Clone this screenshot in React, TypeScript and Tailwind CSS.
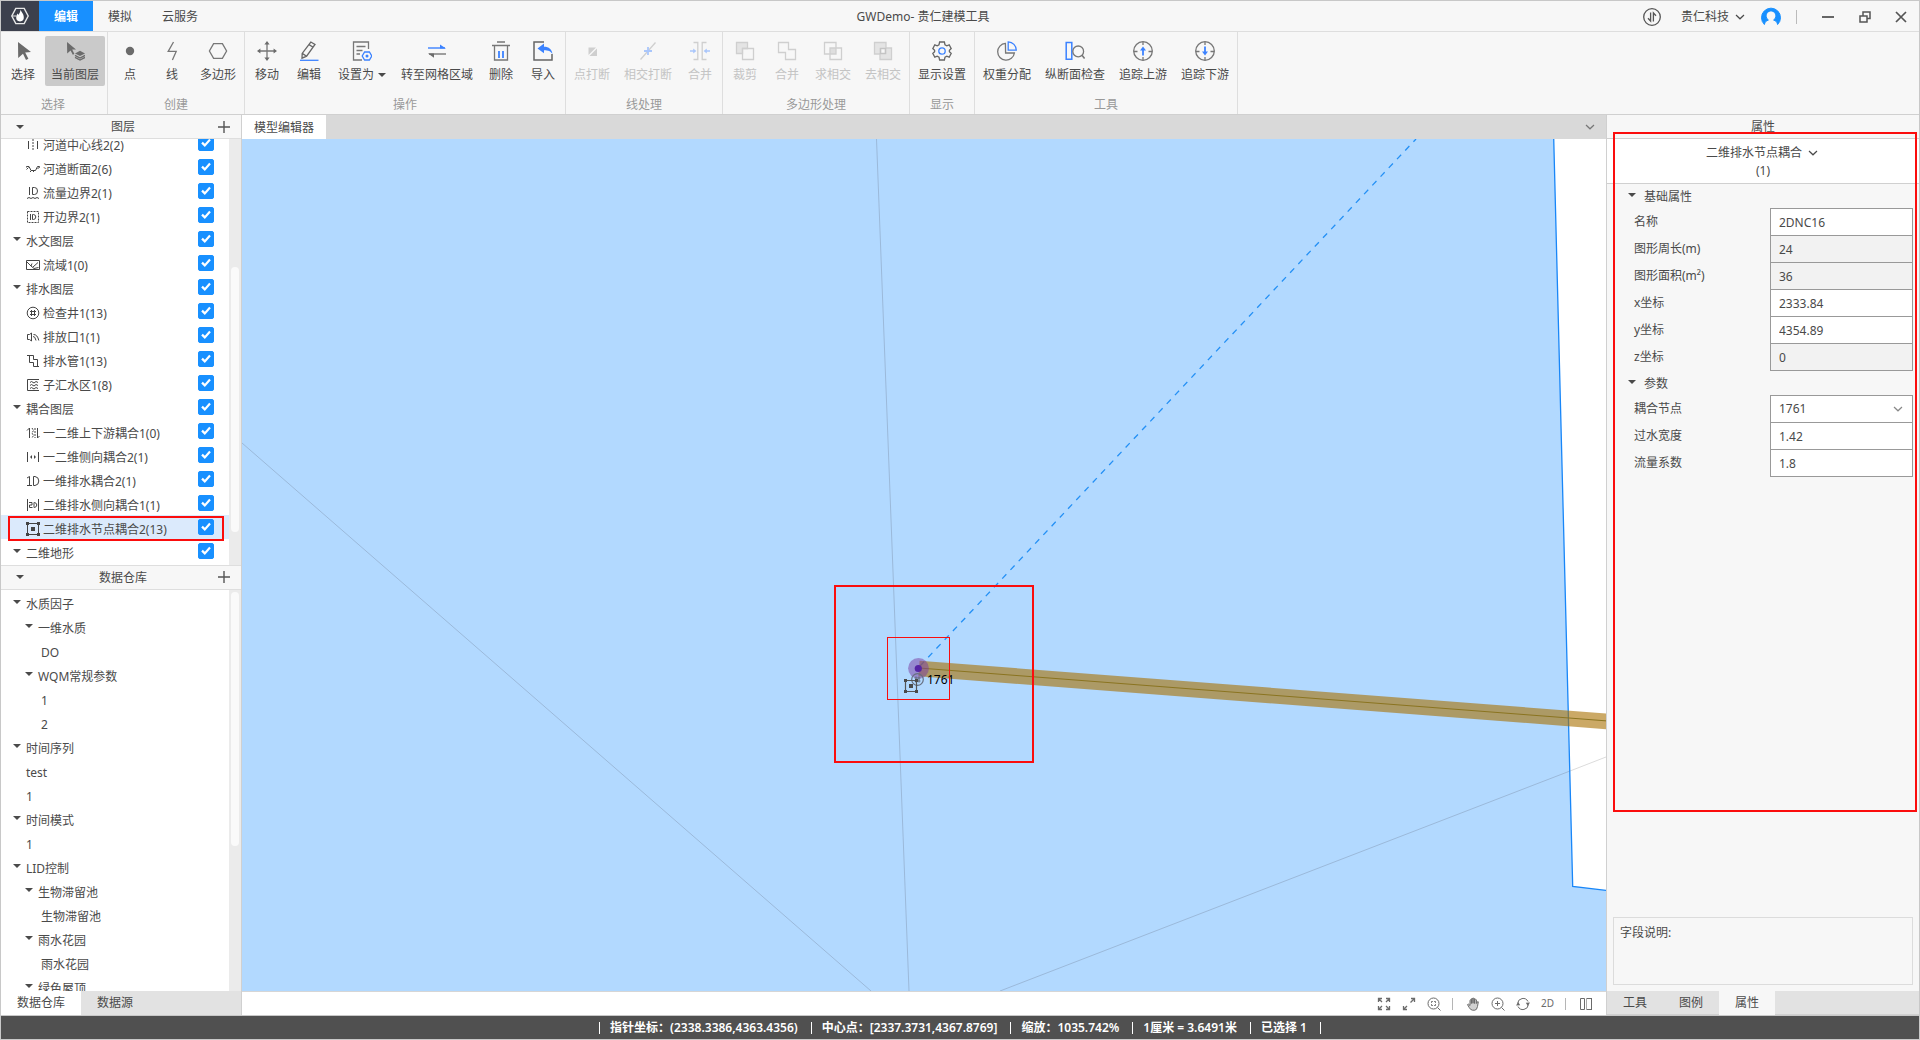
import React from "react";

type IconProps = { size?: number; stroke?: number; children: React.ReactNode; className?: string };

function Icon({ size = 20, stroke = 1.3, children, className = "" }: IconProps) {
  return (
    <svg
      width={size}
      height={size}
      viewBox={`0 0 ${size} ${size}`}
      fill="none"
      stroke="currentColor"
      strokeWidth={stroke}
      className={`shrink-0 ${className}`}
      aria-hidden="true"
    >
      {children}
    </svg>
  );
}

const BLUE = "#3b82ff";
const PALE = "#a9c6fb";

const Caret = ({ className = "" }: { className?: string }) => (
  <svg width="8" height="4" viewBox="0 0 8 4" className={`shrink-0 ${className}`} aria-hidden="true">
    <path d="M0 0H8L4 4Z" fill="#4a4a4a" />
  </svg>
);

const Chevron = ({ className = "" }: { className?: string }) => (
  <svg
    width="10"
    height="6"
    viewBox="0 0 10 6"
    fill="none"
    stroke="currentColor"
    strokeWidth="1.2"
    className={`shrink-0 ${className}`}
    aria-hidden="true"
  >
    <path d="M1 1L5 4.8L9 1" />
  </svg>
);

const Plus = () => (
  <svg width="12" height="12" viewBox="0 0 12 12" stroke="#555" strokeWidth="1.4" aria-hidden="true">
    <path d="M6 0V12M0 6H12" />
  </svg>
);

/* ---------- ribbon icons ---------- */

const toolIcons: Record<string, React.ReactNode> = {
  select: <path d="M5 1L18 11L12.2 11.6L15.4 17.8L13 19L10 12.8L5.2 17Z" fill="#6b6b6b" stroke="none" />,
  layer: (
    <>
      <path d="M2 1L11 8.4L7.2 8.6L9.4 13L7.8 13.8L5.6 9.4L2.2 12.4Z" fill="#6b6b6b" stroke="none" />
      <path d="M15 9.8L20 12.4L15 15L10 12.4Z" fill="#6b6b6b" stroke="none" />
      <path d="M10 14.4L15 17L20 14.4M10 16.4L15 19L20 16.4" stroke="#6b6b6b" />
    </>
  ),
  point: <circle cx="10" cy="10" r="4.2" fill="#6b6b6b" stroke="none" />,
  line: <path d="M11.5 1L6.2 10.4H14.2L10.4 19" stroke="#777" />,
  polygon: <path d="M5.6 2.6H14.4L18.6 10L14.4 17.4H5.6L1.4 10Z" stroke="#777" />,
  move: (
    <>
      <path d="M10 2V18M2 10H18" stroke="#777" />
      <path
        d="M10 0L12.6 3.4H7.4ZM10 20L12.6 16.6H7.4ZM0 10L3.4 7.4V12.6ZM20 10L16.6 7.4V12.6Z"
        fill="#6b6b6b"
        stroke="none"
      />
    </>
  ),
  edit: (
    <>
      <path d="M11.8 1L16 3.4L7.6 15.2L3 17.2L3.2 12.4ZM10 3.6L14.2 6.2M3.2 12.4L7.6 15.2" stroke="#666" />
      <path d="M1 19.3H19.5" stroke={BLUE} />
    </>
  ),
  setAs: (
    <>
      <path d="M16.5 8V1H1.5V19H10M4.5 5.5H13.5M4.5 9.5H10.5M4.5 13H8" stroke="#777" />
      <path d="M12.6 11H17.4L19.8 15L17.4 19H12.6L10.2 15Z" stroke={BLUE} />
      <circle cx="15" cy="15" r="1.5" fill={BLUE} stroke="none" />
    </>
  ),
  toGrid: (
    <>
      <path d="M1 7H18" stroke={BLUE} strokeWidth="1.4" />
      <path d="M13 3.4L19 7.6H13Z" fill={BLUE} stroke="none" />
      <path d="M2 13H19" stroke="#777" strokeWidth="1.4" />
      <path d="M7 16.8L1 12.4H7Z" fill="#6b6b6b" stroke="none" />
    </>
  ),
  remove: (
    <>
      <path d="M1 4.5H19M6 1H14M3.5 5V19H16.5V5" stroke="#777" />
      <path d="M8 10V17M12 10V17" stroke={BLUE} strokeWidth="1.8" />
    </>
  ),
  import: (
    <>
      <path d="M11 1H1V19H19V13" stroke="#666" strokeWidth="1.5" />
      <path d="M4.5 7.4L11 2.6V5.8C16 5.8 19 8.4 19.4 13C17.6 10 15.4 9.2 11 9.2V12.2Z" fill={BLUE} stroke="none" />
    </>
  ),
  breakPoint: (
    <>
      <path d="M6.5 6.5H14L6.5 14Z" fill="#cfcfcf" stroke="none" />
      <path d="M15 7.5V15H7.5Z" fill="#cfcfcf" stroke="none" />
    </>
  ),
  breakCross: (
    <>
      <path d="M2.5 18.5L17.5 1.5" stroke="#cfcfcf" />
      <path d="M10 6V14M6 10H14" stroke={PALE} strokeWidth="1.8" />
    </>
  ),
  mergeLine: (
    <>
      <path d="M3.5 1.5H7.8V18.5H3.5M16.5 1.5H12.2V18.5H16.5" stroke="#cfcfcf" />
      <path d="M0 10H4M16 10H20" stroke={PALE} strokeWidth="1.4" />
      <path d="M3.2 7.4L6.4 10L3.2 12.6ZM16.8 7.4L13.6 10L16.8 12.6Z" fill={PALE} stroke="none" />
    </>
  ),
  clip: (
    <>
      <path d="M1.5 1.5H12.5V7.5H7.5V12.5H1.5Z" fill="#e4e4e4" stroke="#cfcfcf" />
      <path d="M7.5 7.5H18.5V18.5H7.5Z" stroke="#cfcfcf" />
    </>
  ),
  union: <path d="M1.5 1.5H11.5V8.5H18.5V18.5H8.5V11.5H1.5Z" stroke="#cfcfcf" />,
  intersect: (
    <>
      <path d="M7 7H13V13H7Z" fill="#dedede" stroke="none" />
      <path d="M1.5 1.5H13V13H1.5ZM7 7H18.5V18.5H7Z" stroke="#cfcfcf" />
    </>
  ),
  subtract: (
    <>
      <path d="M1.5 1.5H13V7H18.5V18.5H7V13H1.5Z" fill="#e4e4e4" stroke="#cfcfcf" />
      <path d="M7.5 7.5H12.5V12.5H7.5Z" fill="#f7f7f7" stroke="#c4c4c4" strokeWidth="1.6" />
    </>
  ),
  settings: (
    <>
      <path
        d="M7.6 1H12.4L13 3.8L14.8 4.8L17.2 3.8L19.2 7.6L17.4 9.2V10.8L19.2 12.4L17.2 16.2L14.8 15.2L13 16.2L12.4 19H7.6L7 16.2L5.2 15.2L2.8 16.2L0.8 12.4L2.6 10.8V9.2L0.8 7.6L2.8 3.8L5.2 4.8L7 3.8Z"
        stroke="#666"
      />
      <circle cx="10" cy="10" r="3.2" stroke={BLUE} />
    </>
  ),
  weight: (
    <>
      <path d="M8.4 2.4A8.4 8.4 0 1 0 17.4 12H8.6Z" stroke="#777" />
      <path d="M11.2 0.8A8.4 8.4 0 0 1 19.3 9.2H11.2Z" stroke={BLUE} />
    </>
  ),
  profile: (
    <>
      <path d="M1.2 1.5H6.8V18.3H1.2Z" stroke={BLUE} strokeWidth="1.5" />
      <circle cx="13.2" cy="10.4" r="5.4" stroke="#777" />
      <path d="M17 14.2L19.6 17.6" stroke="#777" strokeWidth="1.6" />
    </>
  ),
  traceUp: (
    <>
      <circle cx="10" cy="10" r="9.3" stroke="#777" />
      <path d="M10 0.7V4M10 16V19.3M0.7 10.5H4.5M15.5 10.5H19.3" stroke="#777" />
      <path d="M10 8V14.5" stroke={BLUE} strokeWidth="1.8" />
      <path d="M10 5.4L13 9.6H7Z" fill={BLUE} stroke="none" />
    </>
  ),
  traceDown: (
    <>
      <circle cx="10" cy="10" r="9.3" stroke="#777" />
      <path d="M10 0.7V4M10 16V19.3M0.7 10.5H4.5M15.5 10.5H19.3" stroke="#777" />
      <path d="M10 5.5V12" stroke={BLUE} strokeWidth="1.8" />
      <path d="M10 14.6L13 10.4H7Z" fill={BLUE} stroke="none" />
    </>
  ),
};

type Tool = { label: string; icon: string; width: string; active?: boolean; disabled?: boolean; menu?: boolean };
type Group = { label: string; tools: Tool[] };

const groups: Group[] = [
  {
    label: "选择",
    tools: [
      { label: "选择", icon: "select", width: "w-11" },
      { label: "当前图层", icon: "layer", width: "w-15", active: true },
    ],
  },
  {
    label: "创建",
    tools: [
      { label: "点", icon: "point", width: "w-[42px]" },
      { label: "线", icon: "line", width: "w-[42px]" },
      { label: "多边形", icon: "polygon", width: "w-[50px]" },
    ],
  },
  {
    label: "操作",
    tools: [
      { label: "移动", icon: "move", width: "w-[42px]" },
      { label: "编辑", icon: "edit", width: "w-[42px]" },
      { label: "设置为", icon: "setAs", width: "w-16", menu: true },
      { label: "转至网格区域", icon: "toGrid", width: "w-[86px]" },
      { label: "删除", icon: "remove", width: "w-[42px]" },
      { label: "导入", icon: "import", width: "w-[42px]" },
    ],
  },
  {
    label: "线处理",
    tools: [
      { label: "点打断", icon: "breakPoint", width: "w-[50px]", disabled: true },
      { label: "相交打断", icon: "breakCross", width: "w-[62px]", disabled: true },
      { label: "合并", icon: "mergeLine", width: "w-[42px]", disabled: true },
    ],
  },
  {
    label: "多边形处理",
    tools: [
      { label: "裁剪", icon: "clip", width: "w-[42px]", disabled: true },
      { label: "合并", icon: "union", width: "w-[42px]", disabled: true },
      { label: "求相交", icon: "intersect", width: "w-[50px]", disabled: true },
      { label: "去相交", icon: "subtract", width: "w-[50px]", disabled: true },
    ],
  },
  { label: "显示", tools: [{ label: "显示设置", icon: "settings", width: "w-[62px]" }] },
  {
    label: "工具",
    tools: [
      { label: "权重分配", icon: "weight", width: "w-[62px]" },
      { label: "纵断面检查", icon: "profile", width: "w-[74px]" },
      { label: "追踪上游", icon: "traceUp", width: "w-[62px]" },
      { label: "追踪下游", icon: "traceDown", width: "w-[62px]" },
    ],
  },
];

function ToolButton({ tool }: { tool: Tool }) {
  return (
    <button
      type="button"
      disabled={tool.disabled}
      className={`flex h-[50px] flex-col items-center gap-1.5 rounded-xs pt-[5px] whitespace-nowrap ${tool.width} ${
        tool.active ? "bg-[#cacaca]" : ""
      } ${tool.disabled ? "text-[#c4c4c4]" : "text-[#4a4a4a]"}`}
    >
      <Icon>{toolIcons[tool.icon]}</Icon>
      <span className="flex items-center gap-1 leading-4">
        {tool.label}
        {tool.menu && <Caret />}
      </span>
    </button>
  );
}

function Ribbon() {
  return (
    <nav className="flex shrink-0 border-b border-[#d0d0d0]">
      {groups.map((g, i) => (
        <section
          key={g.label}
          className={`flex flex-col items-center border-r border-[#dedede] pt-1 ${i === 0 ? "pr-0.5" : "px-px"}`}
        >
          <div className="flex">
            {g.tools.map((t) => (
              <ToolButton key={t.label} tool={t} />
            ))}
          </div>
          <h2 className="mt-[11px] pb-px leading-4 text-[#999]">{g.label}</h2>
        </section>
      ))}
    </nav>
  );
}

/* ---------- title bar ---------- */

function TitleBar() {
  return (
    <header className="flex h-[31px] shrink-0 border-b border-[#dedede]">
      <div className="flex w-[212px] shrink-0">
        <div className="flex w-[38px] items-center justify-center bg-[#3c404d]">
          <svg width="18" height="18" viewBox="0 0 18 18" aria-label="logo">
            <path d="M4.8 1.4H13.2L17.2 9L13.2 16.6H4.8L0.8 9Z" fill="none" stroke="#e8e8e8" strokeWidth="1.4" />
            <path
              d="M9.5 2.5C10 5 12.8 6.5 12.8 10.2A4 4 0 0 1 9 14.4A4 4 0 0 1 5.2 10.2C5.2 8.6 6 7.4 6.8 6.6L7.6 8C8.2 6.4 9.4 5.2 9.5 2.5Z"
              fill="#fff"
            />
            <path d="M1 9H5" stroke="#e8e8e8" />
          </svg>
        </div>
        <button type="button" className="w-[54px] bg-[#1890ff] pt-0.5 font-bold text-white">
          编辑
        </button>
        <button type="button" className="w-[54px] pt-0.5">
          模拟
        </button>
        <button type="button" className="w-[66px] pt-0.5">
          云服务
        </button>
      </div>
      <h1 className="flex flex-1 items-center justify-center pt-0.5">GWDemo- 贵仁建模工具</h1>
      <div className="flex w-[286px] shrink-0 items-center pt-px pr-3 pl-2.5">
        <button type="button" aria-label="同步">
          <Icon size={18}>
            <circle cx="9" cy="9" r="8.3" stroke="#555" />
            <path d="M7.6 4.5V13L5 10.2M10.4 13.5V5L13 7.8" stroke="#555" />
          </Icon>
        </button>
        <button type="button" className="ml-5 flex items-center gap-1.5">
          贵仁科技
          <Chevron />
        </button>
        <button type="button" aria-label="账户" className="ml-4">
          <svg width="20" height="20" viewBox="0 0 20 20">
            <path
              d="M3.4 17.5A9.5 9.5 0 1 1 16.6 17.5C16.2 15 14.8 13.8 12.6 13A4.8 4.8 0 1 0 7.4 13C5.2 13.8 3.8 15 3.4 17.5Z"
              fill="#1890ff"
              stroke="#1890ff"
              strokeLinejoin="round"
            />
            <circle cx="10" cy="8.6" r="4.2" fill="#f7f7f7" />
          </svg>
        </button>
        <span className="ml-[15px] h-3.5 w-px bg-[#bbb]" />
        <div className="ml-6 flex flex-1 items-center justify-between text-[#555]">
          <button type="button" aria-label="最小化">
            <Icon size={14}>
              <path d="M1 7H13" strokeWidth="1.8" />
            </Icon>
          </button>
          <button type="button" aria-label="还原">
            <Icon size={12}>
              <path d="M1 5H8V11H1ZM4 5V1H11V7.5H8" strokeWidth="1.5" />
            </Icon>
          </button>
          <button type="button" aria-label="关闭">
            <Icon size={12}>
              <path d="M1 1L11 11M11 1L1 11" strokeWidth="1.7" />
            </Icon>
          </button>
        </div>
      </div>
    </header>
  );
}

/* ---------- left panels ---------- */

const layerIcons: Record<string, React.ReactNode> = {
  center: (
    <>
      <path d="M2.5 3V11M11.5 3V11" />
      <path d="M7 1V13" strokeDasharray="2 1" />
    </>
  ),
  section: (
    <path d="M0.5 5.5V4.5H3L5 8.5H9.5L11.5 4.5H13.5V5.5M0.5 7.5L2.5 5.5M4 10L5.5 8.5M7 10L8.5 8.5M11.5 7L13.5 5" />
  ),
  flow: (
    <>
      <path d="M3.5 1V9M6.5 1.5H8.5Q11.5 1.5 11.5 5T8.5 8.5H6.5Z" />
      <path d="M1 12.5L3 11.5L5 12.5L7 11.5L9 12.5L11 11.5L13 12.5" />
    </>
  ),
  open: (
    <>
      <path d="M1.5 1.5H12.5V12.5H1.5Z" strokeDasharray="2 1" />
      <path d="M4.5 4V10M6.5 4.5H7.5Q9.8 4.8 9.8 7T7.5 9.5H6.5Z" />
    </>
  ),
  basin: <path d="M0.5 2.5H13.5V11.5H0.5ZM1 4L5 8L8 10.5L12.5 9.5M5 8L6 5.5M7 9L12 4.5" />,
  manhole: (
    <>
      <circle cx="7" cy="7" r="5.8" />
      <path d="M5.5 4V10M8.5 4V10M4 5.5H10M4 8.5H10" />
    </>
  ),
  outlet: <path d="M1.5 4.5H3.5L5.5 3V11L3.5 9.5H1.5ZM7 6.5Q9 6 10 10.5M7.5 4.5Q11.5 4.5 12.8 10.5" />,
  pipe: <path d="M1 1.5H7.5V5.5H11.5V12.5M3.5 1.5V8.5H7.5V12.5H13" />,
  sub: (
    <>
      <path d="M13 1.5H1.5V12.5H13" />
      <path d="M4 4.5L5.5 3.5L8 5L10 3.5L12 4.5M4 7.5L5.5 6.5L8 8L10 6.5L12 7.5M4 10.5L5.5 9.5L8 11L10 9.5L12 10.5" />
    </>
  ),
  updown: (
    <>
      <path d="M3.5 12V2L1 4.5M11.5 2V12L13.5 10" />
      <path d="M6 2L7.5 4.5L6 7L7.5 9.5L6 12M9 2V12" strokeDasharray="2 1" />
    </>
  ),
  side: (
    <>
      <path d="M1.5 2V12M12.5 2V12" />
      <path d="M6 5L4 7L6 9ZM8 5L10 7L8 9Z" fill="currentColor" stroke="none" />
    </>
  ),
  oneD: <path d="M1 4L3.5 2.5V11.5M1 11.5H6M7.5 2.5H9Q12.8 3 12.8 7T9 11.5H7.5Z" />,
  twoSide: <path d="M1.5 1V13M12.5 1V13M3 4.5H6V7H3.5V9.5H6.5M8 4.5H8.5Q10.8 5 10.8 7T8.5 9.5H8Z" />,
  node: (
    <>
      <path d="M1.5 1.5H12.5V12.5H1.5Z" />
      <path
        d="M0 0H3V3H0ZM11 0H14V3H11ZM0 11H3V14H0ZM11 11H14V14H11ZM5 5H9V9H5Z"
        fill="currentColor"
        stroke="none"
      />
    </>
  ),
};

type Layer = { label: string; icon?: string; selected?: boolean };

const layers: Layer[] = [
  { label: "河道中心线2(2)", icon: "center" },
  { label: "河道断面2(6)", icon: "section" },
  { label: "流量边界2(1)", icon: "flow" },
  { label: "开边界2(1)", icon: "open" },
  { label: "水文图层" },
  { label: "流域1(0)", icon: "basin" },
  { label: "排水图层" },
  { label: "检查井1(13)", icon: "manhole" },
  { label: "排放口1(1)", icon: "outlet" },
  { label: "排水管1(13)", icon: "pipe" },
  { label: "子汇水区1(8)", icon: "sub" },
  { label: "耦合图层" },
  { label: "一二维上下游耦合1(0)", icon: "updown" },
  { label: "一二维侧向耦合2(1)", icon: "side" },
  { label: "一维排水耦合2(1)", icon: "oneD" },
  { label: "二维排水侧向耦合1(1)", icon: "twoSide" },
  { label: "二维排水节点耦合2(13)", icon: "node", selected: true },
  { label: "二维地形" },
];

function LayerRow({ layer, index }: { layer: Layer; index: number }) {
  const id = `layer-${index}`;
  return (
    <li
      className={`relative flex h-6 shrink-0 items-center pr-[15px] ${layer.icon ? "pl-[25px]" : "pl-3"} ${
        layer.selected ? "bg-[#dbeafc]" : ""
      }`}
    >
      {layer.icon ? (
        <Icon size={14} stroke={1} className="mt-1 mr-[3px] text-[#444]">
          {layerIcons[layer.icon]}
        </Icon>
      ) : (
        <Caret className="mr-[5px]" />
      )}
      <label htmlFor={id} className="flex-1 pt-1.5 leading-[18px]">
        {layer.label}
      </label>
      <span className="grid">
        <input
          id={id}
          type="checkbox"
          defaultChecked
          className="peer col-start-1 row-start-1 size-4 appearance-none rounded-xs border border-[#bbb] checked:border-[#1890ff] checked:bg-[#1890ff]"
        />
        <svg
          viewBox="0 0 16 16"
          className="pointer-events-none invisible col-start-1 row-start-1 size-4 peer-checked:visible"
          fill="none"
          stroke="#fff"
          strokeWidth="2.2"
        >
          <path d="M4 7.6L6.8 10.4L12 4.6" />
        </svg>
      </span>
      {layer.selected && (
        <span className="pointer-events-none absolute top-px right-[5px] -bottom-0.5 left-[7px] z-10 border-2 border-[#fb0d0d]" />
      )}
    </li>
  );
}

const tree: { label: string; level: number; leaf?: boolean }[] = [
  { label: "水质因子", level: 0 },
  { label: "一维水质", level: 1 },
  { label: "DO", level: 2, leaf: true },
  { label: "WQM常规参数", level: 1 },
  { label: "1", level: 2, leaf: true },
  { label: "2", level: 2, leaf: true },
  { label: "时间序列", level: 0 },
  { label: "test", level: 1, leaf: true },
  { label: "1", level: 1, leaf: true },
  { label: "时间模式", level: 0 },
  { label: "1", level: 1, leaf: true },
  { label: "LID控制", level: 0 },
  { label: "生物滞留池", level: 1 },
  { label: "生物滞留池", level: 2, leaf: true },
  { label: "雨水花园", level: 1 },
  { label: "雨水花园", level: 2, leaf: true },
  { label: "绿色屋顶", level: 1 },
];

const branchPad = ["pl-3", "pl-6"];
const leafPad = ["pl-3", "pl-[25px]", "pl-10"];

function PanelHeader({ title }: { title: string }) {
  return (
    <div className="grid h-6 shrink-0 grid-cols-[1fr_auto_1fr] items-center border-b border-[#dedede] bg-[#f7f7f7] pr-[11px] pl-[15px]">
      <button type="button" aria-label={`折叠${title}`} className="justify-self-start">
        <Caret />
      </button>
      <h2 className="pt-px">{title}</h2>
      <button type="button" aria-label={`新增${title}`} className="justify-self-end">
        <Plus />
      </button>
    </div>
  );
}

function Sidebar() {
  return (
    <aside className="flex w-[241px] shrink-0 flex-col border-r border-[#d0d0d0] bg-white">
      <section className="flex min-h-0 flex-1 flex-col border-b border-[#dedede]">
        <PanelHeader title="图层" />
        <div className="flex min-h-0 flex-1 overflow-hidden">
          <ul className="-mt-2 flex flex-1 flex-col">
            {layers.map((l, i) => (
              <LayerRow key={l.label} layer={l} index={i} />
            ))}
          </ul>
          <div className="w-3 bg-[#ebebeb] px-0.5 pt-32">
            <div className="h-[265px] rounded-full bg-[#fafafa]" />
          </div>
        </div>
      </section>
      <section className="flex min-h-0 flex-1 flex-col">
        <PanelHeader title="数据仓库" />
        <div className="flex min-h-0 flex-1 overflow-hidden">
          <ul className="flex flex-1 flex-col">
            {tree.map((n, i) => (
              <li
                key={i}
                className={`flex h-6 shrink-0 items-center gap-[5px] ${n.leaf ? leafPad[n.level] : branchPad[n.level]}`}
              >
                {!n.leaf && <Caret />}
                <span className="pt-1.5 leading-[18px]">{n.label}</span>
              </li>
            ))}
          </ul>
          <div className="w-3 bg-[#ebebeb] px-0.5 pt-0.5">
            <div className="h-[254px] rounded-full bg-[#fafafa]" />
          </div>
        </div>
        <div className="flex h-6 shrink-0 bg-[#e2e2e2]">
          <button type="button" className="bg-white px-4">
            数据仓库
          </button>
          <button type="button" className="px-4">
            数据源
          </button>
        </div>
      </section>
    </aside>
  );
}

/* ---------- map ---------- */

function MapView() {
  return (
    <svg
      viewBox="242 139 1364 852"
      preserveAspectRatio="xMidYMid slice"
      className="block min-h-0 w-full flex-1 bg-[#b2d9ff]"
      role="img"
      aria-label="模型地图"
    >
      <path d="M1553.5 130L1572.7 886.5L1620 892V130Z" fill="#fff" />
      <g stroke="#9bb9da" fill="none">
        <path d="M876.5 139L909 991" />
        <path d="M242 443L871 991" />
        <path d="M1000 991L1570 771" />
        <path d="M1570 771L1606 757" stroke="#dcdcdc" />
      </g>
      <path d="M1553.5 130L1572.7 886.5L1620 892" fill="none" stroke="#1886f8" strokeWidth="1.3" />
      <path d="M920 666L1416 139" stroke="#2490f5" strokeWidth="1.3" strokeDasharray="6 6" />
      <path d="M919 668.5L1608 721.5" stroke="#a87000" strokeOpacity="0.6" strokeWidth="15.6" />
      <path d="M919 668L1608 721" stroke="#8a7420" strokeWidth="1" />
      <circle cx="918.5" cy="668.3" r="10.4" fill="#7a3ca0" fillOpacity="0.5" />
      <circle cx="918.3" cy="668.5" r="3.6" fill="#5524a4" />
      <g fill="none" stroke="#666f80" strokeWidth="1.2">
        <circle cx="917.5" cy="679.5" r="5.8" />
        <path d="M916 676.5V682.5M919 676.5V682.5M914.5 678H920.5M914.5 681H920.5" />
        <path d="M905.5 680.5H916.5V691.5H905.5Z" stroke="#555" />
      </g>
      <path
        d="M904 679H907V682H904ZM915 679H918V682H915ZM904 690H907V693H904ZM915 690H918V693H915ZM909 684H913V688H909Z"
        fill="#4a4a4a"
      />
      <text x="927" y="684" fontSize="12" fill="#000">
        1761
      </text>
      <rect x="887.5" y="637.5" width="62" height="62" fill="none" stroke="#fb0d0d" />
      <rect x="835" y="586" width="198" height="176" fill="none" stroke="#fb0d0d" strokeWidth="2" />
    </svg>
  );
}

function MapTools() {
  const sep = <span className="h-3 w-px bg-[#b5b5b5]" />;
  return (
    <div className="flex h-6 shrink-0 items-center justify-end gap-[11px] border-t border-[#d6d6d6] bg-white pr-[13px] text-[#6b6b6b]">
      <button type="button" aria-label="全屏">
        <Icon size={14}>
          <path d="M1.5 5V1.5H5M9 1.5H12.5V5M12.5 9V12.5H9M5 12.5H1.5V9M1.5 1.5L5 5M12.5 1.5L9 5M12.5 12.5L9 9M1.5 12.5L5 9" />
        </Icon>
      </button>
      <button type="button" aria-label="全图">
        <Icon size={14}>
          <path d="M9 1.5H12.5V5M12.5 1.5L8.5 5.5M5 12.5H1.5V9M1.5 12.5L5 9" />
        </Icon>
      </button>
      <button type="button" aria-label="缩放至图层">
        <Icon size={14} stroke={1}>
          <circle cx="6.5" cy="6.5" r="5.5" />
          <path d="M10.5 10.5L13.5 13.5M4.5 5.8V4.5H5.8M7.2 4.5H8.5V5.8M8.5 7.2V8.5H7.2M5.8 8.5H4.5V7.2" />
        </Icon>
      </button>
      {sep}
      <button type="button" aria-label="平移" className="ml-0.5">
        <Icon size={14}>
          <path
            d="M4 8.5V3.2Q4.7 2.2 5.4 3.2V6.5V1.8Q6.2 0.8 7 1.8V6.3V1.6Q7.8 0.6 8.6 1.6V6.5V2.8Q9.5 1.8 10.4 2.8V6.5Q11.3 4 12.3 4.8L11.5 9.5Q10.8 13.2 8.8 13.2H6.5Q4.5 13 3.2 10.5L1.5 7.6Q2.2 6.2 4 8.5Z"
            fill="#d2d2d2"
            strokeWidth="1"
          />
        </Icon>
      </button>
      <button type="button" aria-label="放大">
        <Icon size={14} stroke={1}>
          <circle cx="6.5" cy="6.5" r="5.5" />
          <path d="M10.5 10.5L13.5 13.5M6.5 4V9M4 6.5H9" />
        </Icon>
      </button>
      <button type="button" aria-label="刷新">
        <Icon size={14} stroke={1}>
          <path d="M1.6 6.5A5.5 5.5 0 0 1 12 4.5M12.4 7.5A5.5 5.5 0 0 1 2 9.5" />
          <path d="M14 5.5L11.8 9L9.8 5.8ZM0 8.5L2.2 5L4.2 8.2Z" fill="currentColor" stroke="none" />
        </Icon>
      </button>
      <button type="button" className="text-[10px]">
        2D
      </button>
      {sep}
      <button type="button" aria-label="分屏" className="ml-0.5">
        <Icon size={14} stroke={1}>
          <path d="M5.5 1.5H1.5V12.5H5.5ZM12.5 1V13M7.5 1.5H12.5M7.5 12.5H12.5" />
          <path d="M7.5 1V13" stroke="#aaa" />
        </Icon>
      </button>
    </div>
  );
}

/* ---------- properties ---------- */

type Field = { label: string; value: string; readOnly?: boolean; select?: boolean };

const baseFields: Field[] = [
  { label: "名称", value: "2DNC16" },
  { label: "图形周长(m)", value: "24", readOnly: true },
  { label: "图形面积(m²)", value: "36", readOnly: true },
  { label: "x坐标", value: "2333.84" },
  { label: "y坐标", value: "4354.89" },
  { label: "z坐标", value: "0", readOnly: true },
];

const paramFields: Field[] = [
  { label: "耦合节点", value: "1761", select: true },
  { label: "过水宽度", value: "1.42" },
  { label: "流量系数", value: "1.8" },
];

function FieldGroup({ title, fields }: { title: string; fields: Field[] }) {
  return (
    <section>
      <h3 className="flex h-6 items-center gap-2 pt-0.5 pl-[21px]">
        <Caret className="-mt-1" />
        {title}
      </h3>
      <div className="pr-1.5 pb-px pl-[27px]">
        {fields.map((f) => (
          <div key={f.label} className="flex h-[27px] items-center">
            <label htmlFor={f.label} className="flex-1">
              {f.label}
            </label>
            <div className="relative -mb-px w-[143px]">
              {f.select ? (
                <>
                  <select
                    id={f.label}
                    defaultValue={f.value}
                    className="block h-7 w-full appearance-none border border-[#999] bg-white px-2"
                  >
                    <option>{f.value}</option>
                  </select>
                  <Chevron className="pointer-events-none absolute top-[11px] right-2.5 text-[#888]" />
                </>
              ) : (
                <input
                  id={f.label}
                  type="text"
                  defaultValue={f.value}
                  readOnly={f.readOnly}
                  className={`block h-7 w-full border border-[#999] px-2 ${f.readOnly ? "bg-[#f2f2f2]" : "bg-white"}`}
                />
              )}
            </div>
          </div>
        ))}
      </div>
    </section>
  );
}

function Properties() {
  return (
    <aside className="relative flex w-[313px] shrink-0 flex-col border-l border-[#d0d0d0]">
      <h2 className="flex h-6 shrink-0 items-center justify-center border-b border-[#d0d0d0]">属性</h2>
      <button
        type="button"
        className="flex h-[45px] shrink-0 flex-col items-center border-b border-[#d0d0d0] bg-white pt-[5px] leading-[18px]"
      >
        <span className="flex items-center gap-1.5 pr-0.5">
          二维排水节点耦合
          <Chevron />
        </span>
        <span>(1)</span>
      </button>
      <div className="min-h-0 flex-1">
        <FieldGroup title="基础属性" fields={baseFields} />
        <FieldGroup title="参数" fields={paramFields} />
      </div>
      <div className="mx-1.5 mb-1.5 h-[68px] shrink-0 border border-[#dcdcdc] px-1.5 py-[7px]">字段说明:</div>
      <div className="flex h-6 shrink-0 border-b border-[#d0d0d0] bg-[#e2e2e2]">
        <button type="button" className="px-4 pt-px">
          工具
        </button>
        <button type="button" className="px-4 pt-px">
          图例
        </button>
        <button type="button" className="-mb-px bg-[#f7f7f7] px-4">
          属性
        </button>
      </div>
      <span className="pointer-events-none absolute top-[17px] right-0.5 h-[680px] w-[304px] border-2 border-[#fb0d0d]" />
    </aside>
  );
}

/* ---------- status ---------- */

const status = [
  "指针坐标：(2338.3386,4363.4356)",
  "中心点：[2337.3731,4367.8769]",
  "缩放：1035.742%",
  "1厘米 = 3.6491米",
  "已选择 1",
];

function StatusBar() {
  return (
    <footer className="flex h-6 shrink-0 items-center justify-center gap-2.5 border-t border-[#c8c8c8] bg-[#505050] font-semibold whitespace-pre text-white">
      <span className="h-3 w-px bg-white" />
      {status.map((s) => (
        <React.Fragment key={s}>
          <span>{s}</span>
          <span className="ml-[3px] h-3 w-px bg-white" />
        </React.Fragment>
      ))}
    </footer>
  );
}

export default function App() {
  return (
    <div
      lang="zh-CN"
      className="flex h-screen flex-col overflow-hidden border border-[#c8c8c8] bg-[#f7f7f7] font-['Noto_Sans','Noto_Sans_CJK_SC',sans-serif] text-xs text-[#4a4a4a]"
    >
      <TitleBar />
      <Ribbon />
      <div className="flex min-h-0 flex-1">
        <Sidebar />
        <main className="flex min-w-0 flex-1 flex-col">
          <div className="flex h-6 shrink-0 items-center justify-between bg-[#d9d9d9] pr-[11px]">
            <button type="button" className="h-full bg-white px-3 pt-px">
              模型编辑器
            </button>
            <button type="button" aria-label="更多标签">
              <Chevron className="text-[#777]" />
            </button>
          </div>
          <MapView />
          <MapTools />
        </main>
        <Properties />
      </div>
      <StatusBar />
    </div>
  );
}
